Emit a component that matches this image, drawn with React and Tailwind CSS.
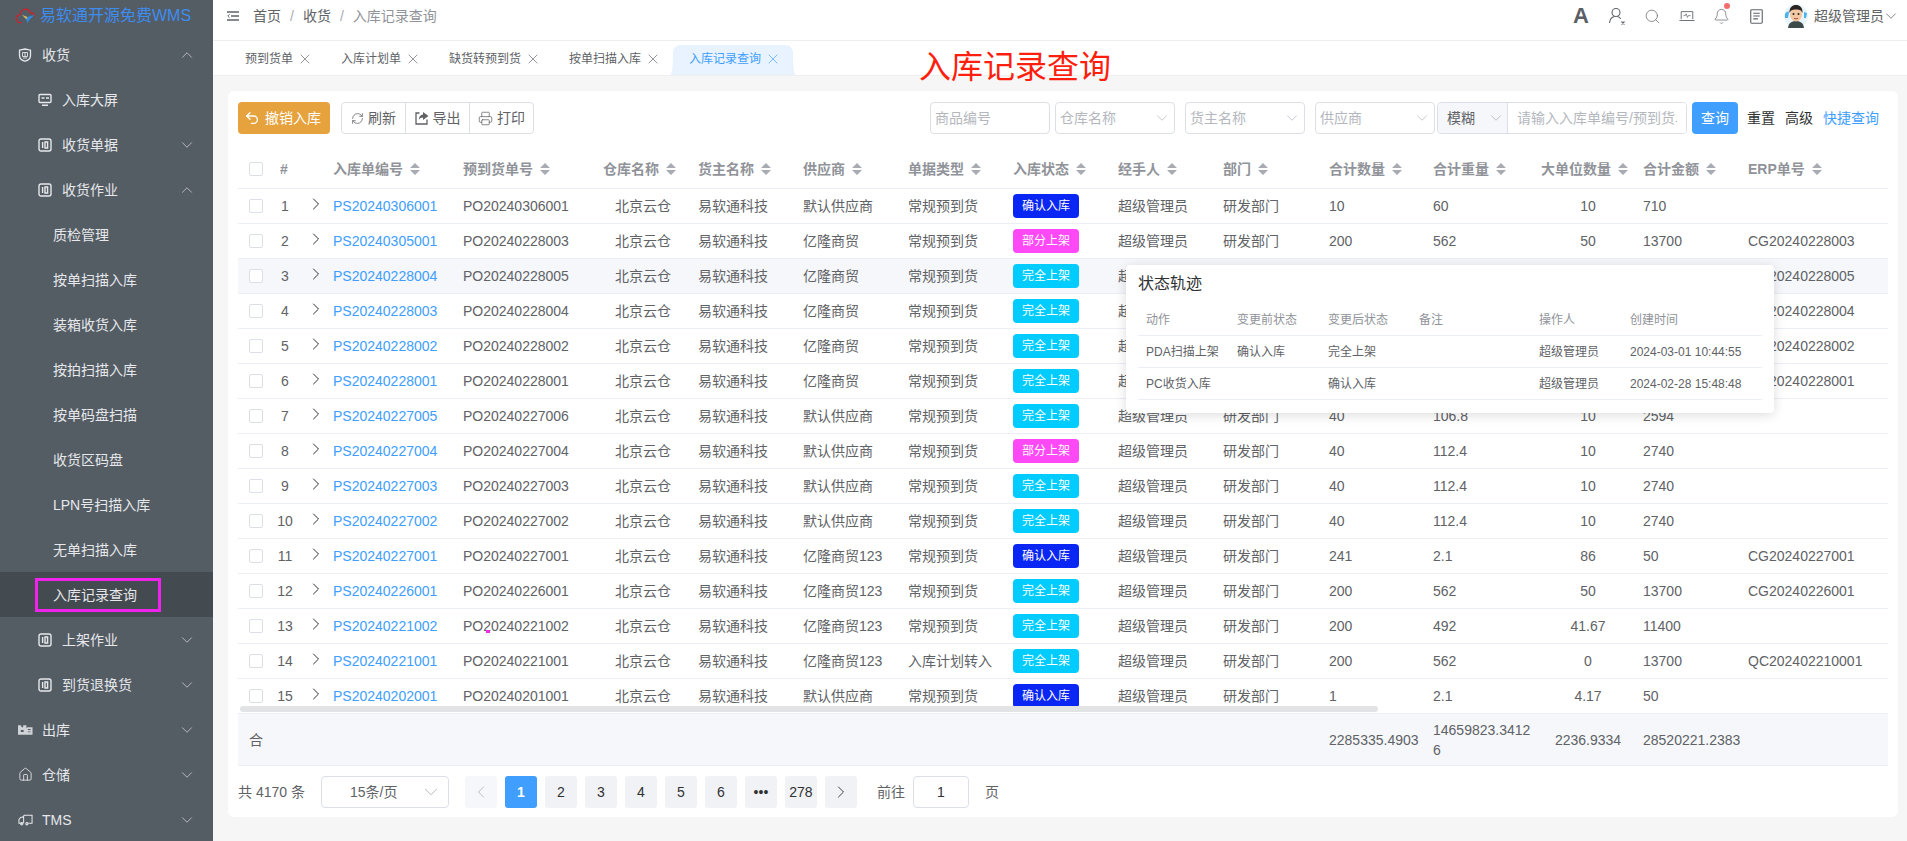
import React from 'react';
import { Bell, ChevronDown, ChevronLeft, ChevronRight, ChevronUp, House, Printer, RefreshCw, Search, Undo2, X } from 'lucide-react';

const fontStack = "font-['Liberation_Sans','Noto_Sans_CJK_SC',sans-serif]";

// Sidebar icons
const ShieldIcon = () => (
  <svg viewBox="0 0 14 14" className="w-[14px] h-[14px]" fill="none" stroke="currentColor">
    <path d="M1.5 2.2 7 1l5.5 1.2v5.2C12.5 10.4 9.8 12.4 7 13.2 4.2 12.4 1.5 10.4 1.5 7.4z" strokeWidth="1.3" />
    <path d="M4.5 4.5h5v4h-5zM7 4.5v4M5 10h4" strokeWidth="0.9" />
  </svg>
);

const ScreenIcon = () => (
  <svg viewBox="0 0 14 14" className="w-[14px] h-[14px]" fill="none" stroke="currentColor">
    <rect x="1" y="1.5" width="12" height="8" rx="1" strokeWidth="1.4" />
    <path d="M3.5 5h3M8 5h3M4 12.2h6" strokeWidth="1.5" />
  </svg>
);

const BoxIcon = () => (
  <svg viewBox="0 0 14 14" className="w-[14px] h-[14px]" fill="none" stroke="currentColor">
    <rect x="1" y="1" width="12" height="12" rx="2" strokeWidth="1.4" />
    <path d="M4.6 4v6M7 4h2.6v6H7z" strokeWidth="1.4" />
  </svg>
);

const OutboundIcon = () => (
  <svg viewBox="0 0 16 12" className="w-[15px] h-[12px]" fill="currentColor">
    <path d="M0 1h3l1 2h1.5V1H9v3l1-1h5.5v8H0z" opacity="0.85" />
    <path d="M3 6h3v2H3zM10.5 5h3v1h-3zM10.5 7.5h3v1h-3z" fill="#545c64" />
  </svg>
);

const TruckIcon = () => (
  <svg viewBox="0 0 16 12" className="w-[15px] h-[12px]" fill="none" stroke="currentColor" strokeWidth="1.1">
    <path d="M5 2.5 7 1h8v8.5h-4M5 9.5H1V5.5L3 3h3v6.5" />
    <circle cx="4" cy="10" r="1.2" />
    <circle cx="9.5" cy="10" r="1.2" />
  </svg>
);

const Logo = () => (
  <svg viewBox="0 0 22 18" className="w-[21px] h-[17px] shrink-0" fill="none">
    <path d="M6.5 15.5C3 15.8 1 13.6 1.2 11c.2-2.4 2-3.8 3.8-3.8C5.6 3.600 8.200 1.200 11 1.300c2.400.1 4.400 1.600 5 3.700 2.200-.1 4 1.300 4.300 3.200" stroke="#c9252d" strokeWidth="1.4" strokeLinecap="round" />
    <path d="M7.500 7.300 13 9.600 20.500 7.300 14.800 12.600 13.300 16.200 11.800 12z" fill="#2f8ce8" />
    <path d="M7.500 7.300 13 9.600 11.800 12z" fill="#f2b233" />
  </svg>
);

// Top bar icons
const MenuFoldIcon = () => (
  <svg viewBox="0 0 12 10" className="w-[12px] h-[10px]" fill="none" stroke="#5f6368" strokeWidth="1.5">
    <path d="M0 1h12M4 5h8M0 9h12" />
    <path d="M2.500 3.300 0.800 5l1.700 1.700" strokeWidth="1" />
  </svg>
);

const UserIcon = () => (
  <svg viewBox="0 0 18 18" className="w-[18px] h-[18px]" fill="none" stroke="#5f6368" strokeWidth="1.1">
    <circle cx="8" cy="5.500" r="4" />
    <path d="M1.500 16c.3-3.500 2.600-6 5-6.500M9.500 9.500c1.300.3 2.500 1.100 3.300 2.300" />
    <path d="M13.500 14.500l3 3M16.500 14.500l-3 3" />
  </svg>
);

const MonitorIcon = () => (
  <svg viewBox="0 0 18 14" className="w-[16px] h-[13px]" fill="none" stroke="#5f6368" strokeWidth="1">
    <path d="M2.500 10V1.500h13V10M0.500 11.500h17" />
    <path d="M5 6h2l1-2 1.500 4 1-2h2.500" strokeWidth="0.8" />
  </svg>
);

const DocIcon = () => (
  <svg viewBox="0 0 14 16" className="w-[13px] h-[15px]" fill="none" stroke="#5f6368" strokeWidth="1.200">
    <rect x="0.800" y="0.800" width="12.400" height="14.400" rx="1" />
    <path d="M3.500 4.500h7M3.500 7.500h7M3.500 10.500h5" />
  </svg>
);

const Avatar = () => (
  <svg viewBox="0 0 24 24" className="w-[24px] h-[24px] shrink-0">
    <circle cx="12" cy="12" r="12" fill="#e8f4fb" />
    <path d="M1 10c1-2 3-3 4-2l-1 6H1zM20 8l3 1-1 5h-2z" fill="#4bb3ea" />
    <path d="M4 24c.6-5 3.600-7 8-7s7.400 2 8 7z" fill="#3c4a4a" />
    <ellipse cx="12" cy="10.500" rx="6" ry="7" fill="#f3c7a2" />
    <path d="M5.500 9C5 3.500 8.500 1 12 1s7 2.500 6.500 8c-1-2.500-2.500-3.500-6.500-3.500S6.500 6.500 5.500 9z" fill="#2b2522" />
    <circle cx="9.500" cy="10" r="1" fill="#2b2522" />
    <circle cx="14.500" cy="10" r="1" fill="#2b2522" />
    <path d="M10 14.200c1.300.8 2.700.8 4 0" stroke="#a5503c" fill="none" />
  </svg>
);

const ExportIcon = () => (
  <svg viewBox="0 0 14 14" className="w-[14px] h-[14px]" fill="none" stroke="#606266" strokeWidth="1.300">
    <path d="M4.500 2H1v11h11V8.500" />
    <path d="M8 1v2.500C5.500 3.700 4 5.500 3.800 9c1.200-2 2.300-2.600 4.200-2.600V9l5.500-4z" fill="#606266" stroke="none" />
  </svg>
);

const SortCaret = () => (
  <svg viewBox="0 0 10 12" className="w-[10px] h-[12px] shrink-0 ml-[7px]" fill="#a8abb2">
    <path d="M5 0 10 5H0zM0 7h10l-5 5z" />
  </svg>
);

const menu = [
  { label: '收货', level: 1, icon: ShieldIcon, arrow: 'up' },
  { label: '入库大屏', level: 2, icon: ScreenIcon },
  { label: '收货单据', level: 2, icon: BoxIcon, arrow: 'down' },
  { label: '收货作业', level: 2, icon: BoxIcon, arrow: 'up' },
  { label: '质检管理', level: 3 },
  { label: '按单扫描入库', level: 3 },
  { label: '装箱收货入库', level: 3 },
  { label: '按拍扫描入库', level: 3 },
  { label: '按单码盘扫描', level: 3 },
  { label: '收货区码盘', level: 3 },
  { label: 'LPN号扫描入库', level: 3 },
  { label: '无单扫描入库', level: 3 },
  { label: '入库记录查询', level: 3, active: true },
  { label: '上架作业', level: 2, icon: BoxIcon, arrow: 'down' },
  { label: '到货退换货', level: 2, icon: BoxIcon, arrow: 'down' },
  { label: '出库', level: 1, icon: OutboundIcon, arrow: 'down' },
  { label: '仓储', level: 1, icon: () => <House size={15} strokeWidth={1.4} />, arrow: 'down' },
  { label: 'TMS', level: 1, icon: TruckIcon, arrow: 'down' },
];

const tabs = ['预到货单', '入库计划单', '缺货转预到货', '按单扫描入库', '入库记录查询'];

const colWidths = [30, 34, 21, 130, 130, 105, 105, 105, 105, 105, 105, 106, 104, 108, 102, 105, 150];

const headers = ['入库单编号', '预到货单号', '仓库名称', '货主名称', '供应商', '单据类型', '入库状态', '经手人', '部门', '合计数量', '合计重量', '大单位数量', '合计金额', 'ERP单号'];

const CONFIRM = '确认入库';
const PART = '部分上架';
const FULL = '完全上架';

const rows = [
  ['PS20240306001', 'PO20240306001', '默认供应商', '常规预到货', CONFIRM, '10', '60', '10', '710', ''],
  ['PS20240305001', 'PO20240228003', '亿隆商贸', '常规预到货', PART, '200', '562', '50', '13700', 'CG20240228003'],
  ['PS20240228004', 'PO20240228005', '亿隆商贸', '常规预到货', FULL, '200', '562', '50', '13700', 'CG20240228005'],
  ['PS20240228003', 'PO20240228004', '亿隆商贸', '常规预到货', FULL, '200', '562', '50', '13700', 'CG20240228004'],
  ['PS20240228002', 'PO20240228002', '亿隆商贸', '常规预到货', FULL, '200', '562', '50', '13700', 'CG20240228002'],
  ['PS20240228001', 'PO20240228001', '亿隆商贸', '常规预到货', FULL, '200', '562', '50', '13700', 'CG20240228001'],
  ['PS20240227005', 'PO20240227006', '默认供应商', '常规预到货', FULL, '40', '106.8', '10', '2594', ''],
  ['PS20240227004', 'PO20240227004', '默认供应商', '常规预到货', PART, '40', '112.4', '10', '2740', ''],
  ['PS20240227003', 'PO20240227003', '默认供应商', '常规预到货', FULL, '40', '112.4', '10', '2740', ''],
  ['PS20240227002', 'PO20240227002', '默认供应商', '常规预到货', FULL, '40', '112.4', '10', '2740', ''],
  ['PS20240227001', 'PO20240227001', '亿隆商贸123', '常规预到货', CONFIRM, '241', '2.1', '86', '50', 'CG20240227001'],
  ['PS20240226001', 'PO20240226001', '亿隆商贸123', '常规预到货', FULL, '200', '562', '50', '13700', 'CG20240226001'],
  ['PS20240221002', 'PO20240221002', '亿隆商贸123', '常规预到货', FULL, '200', '492', '41.67', '11400', ''],
  ['PS20240221001', 'PO20240221001', '亿隆商贸123', '入库计划转入', FULL, '200', '562', '0', '13700', 'QC202402210001'],
  ['PS20240202001', 'PO20240201001', '默认供应商', '常规预到货', CONFIRM, '1', '2.1', '4.17', '50', ''],
];

const statusClass = {
  [CONFIRM]: 'bg-[#0a26f5]',
  [PART]: 'bg-[#ff48f6]',
  [FULL]: 'bg-[#00ccff]',
};

const Sidebar = () => (
  <aside className="w-[213px] shrink-0 bg-[#545c64] text-[#e6e8eb] text-sm">
    <div className="h-[32px] flex items-center pl-[15px] gap-[4px]">
      <Logo />
      <span className="text-base text-[#3d8df0] whitespace-nowrap">易软通开源免费WMS</span>
    </div>
    {menu.map((item) => {
      const Icon = item.icon;
      return (
        <div
          key={item.label}
          className={`h-[45px] flex items-center pr-[17px] ${item.active ? 'bg-[#434a50]' : ''} ${item.level === 1 ? 'pl-[18px]' : item.level === 2 ? 'pl-[38px]' : 'pl-[53px]'}`}
        >
          {Icon && (
            <span className="w-[24px] shrink-0 flex items-center">
              <Icon />
            </span>
          )}
          <span className="flex-1 whitespace-nowrap">{item.label}</span>
          {item.arrow === 'up' && <ChevronUp size={18} strokeWidth={1.1} className="text-[#c9ccd0]" />}
          {item.arrow === 'down' && <ChevronDown size={18} strokeWidth={1.1} className="text-[#c9ccd0]" />}
        </div>
      );
    })}
  </aside>
);

const TopBar = () => (
  <header className="h-[41px] shrink-0 bg-white border-b border-[#eeeeee] flex items-center pb-[8px] pl-[14px] pr-[7px] text-sm">
    <MenuFoldIcon />
    <span className="ml-[14px] text-[#606266]">首页</span>
    <span className="mx-[9px] text-[#a8abb2]">/</span>
    <span className="text-[#606266]">收货</span>
    <span className="mx-[9px] text-[#a8abb2]">/</span>
    <span className="text-[#909399]">入库记录查询</span>
    <div className="ml-auto flex items-center">
      <span className="w-[20px] text-center text-[22px] leading-none font-bold text-[#5b5f66]">A</span>
      <span className="ml-[17px] w-[18px] flex justify-center"><UserIcon /></span>
      <span className="ml-[18px] w-[16px] flex justify-center"><Search size={17} strokeWidth={1} className="shrink-0 text-[#5f6368]" /></span>
      <span className="ml-[18px] w-[18px] flex justify-center"><MonitorIcon /></span>
      <span className="ml-[17px] w-[16px] flex justify-center relative">
        <Bell size={17} strokeWidth={1} className="shrink-0 text-[#5f6368]" />
        <span className="absolute -top-[5px] right-[-1px] w-[6px] h-[6px] rounded-full bg-[#f56c6c]" />
      </span>
      <span className="ml-[20px] w-[14px] flex justify-center"><DocIcon /></span>
      <span className="ml-[21px]"><Avatar /></span>
      <span className="ml-[6px] text-[#606266] whitespace-nowrap">超级管理员</span>
      <ChevronDown size={18} strokeWidth={1} className="text-[#606266] -ml-[2px]" />
    </div>
  </header>
);

const TabBar = () => (
  <div className="h-[35px] shrink-0 bg-white border-b border-[#efefef] flex items-end pl-[16px] text-xs">
    {tabs.map((tab, i) => {
      const active = i === tabs.length - 1;
      return (
        <div
          key={tab}
          className={`relative h-[30px] flex items-center pb-[2px] px-[16px] ${active ? 'text-[#409eff]' : 'text-[#606266]'}`}
        >
          {active && (
            <svg viewBox="0 0 126 30" preserveAspectRatio="none" className="absolute left-[-3px] top-0 w-[126px] h-[30px]" fill="#e8f3ff">
              <path d="M0 30C2 28 3 24 3 8 3 3 6 0 11 0h104c5 0 8 3 8 8 0 16 1 20 3 22z" />
            </svg>
          )}
          <span className="relative whitespace-nowrap">{tab}</span>
          <X size={16} strokeWidth={1} className="relative ml-[4px] mr-[-4px]" />
        </div>
      );
    })}
  </div>
);

const Field = ({ placeholder, width = 'w-[120px]', select, className = '' }) => (
  <div className={`h-[32px] ${width} shrink-0 border border-[#dcdfe6] rounded-[4px] flex items-center pl-[4px] pr-[3px] text-[#b4b7be] bg-white ${className}`}>
    <span className="flex-1 whitespace-nowrap">{placeholder}</span>
    {select && <ChevronDown size={18} strokeWidth={1} className="text-[#b4b7be]" />}
  </div>
);

const Toolbar = () => (
  <div className="h-[32px] flex items-center text-sm pr-[9px]">
    <button className="h-[32px] w-[92px] rounded-[4px] bg-[#e6a23c] text-white flex items-center pl-[6px] gap-[3px]">
      <Undo2 size={16} strokeWidth={2} />
      <span className="ml-[2px]">撤销入库</span>
    </button>
    <div className="ml-[11px] h-[32px] flex border border-[#dcdfe6] rounded-[4px] text-[#606266]">
      <div className="w-[64px] flex items-center justify-center gap-[4px] border-r border-[#dcdfe6]">
        <RefreshCw size={13} strokeWidth={1.4} />
        刷新
      </div>
      <div className="w-[64px] flex items-center justify-center gap-[4px] border-r border-[#dcdfe6]">
        <ExportIcon />
        导出
      </div>
      <div className="flex-1 w-[63px] flex items-center justify-center gap-[4px]">
        <Printer size={15} strokeWidth={1.2} />
        打印
      </div>
    </div>
    <div className="ml-auto flex items-center">
      <Field placeholder="商品编号" />
      <Field placeholder="仓库名称" select className="ml-[5px]" />
      <Field placeholder="货主名称" select className="ml-[10px]" />
      <Field placeholder="供应商" select className="ml-[10px]" />
      <div className="ml-[2px] w-[250px] h-[32px] flex border border-[#dcdfe6] rounded-[4px] overflow-hidden">
        <div className="w-[70px] bg-[#f5f7fa] border-r border-[#dcdfe6] flex items-center pl-[9px] pr-[2px] text-[#606266]">
          <span className="flex-1">模糊</span>
          <ChevronDown size={18} strokeWidth={1} className="text-[#a8abb2]" />
        </div>
        <input
          readOnly
          placeholder="请输入入库单编号/预到货单号"
          className="min-w-0 flex-1 pl-[9px] pr-[9px] outline-none bg-white placeholder:text-[#b4b7be]"
        />
      </div>
      <button className="ml-[5px] w-[46px] h-[32px] rounded-[4px] bg-[#409eff] text-white">查询</button>
      <span className="ml-[9px] text-[#303133]">重置</span>
      <span className="ml-[10px] text-[#303133]">高级</span>
      <span className="ml-[10px] text-[#409eff]">快捷查询</span>
    </div>
  </div>
);

const Checkbox = () => <span className="block w-[14px] h-[14px] border border-[#dcdfe6] rounded-[2px] bg-white" />;

const Th = ({ label, pad = 'pl-[10px]' }) => (
  <th className={`h-[44px] pt-[4px] border-b border-[#ebeef5] font-bold text-[#909399] text-left ${pad}`}>
    <span className="flex items-center whitespace-nowrap">
      {label}
      <SortCaret />
    </span>
  </th>
);

const RecordTable = () => (
  <table className="mt-[11px] w-[1650px] table-fixed border-separate border-spacing-0 text-sm text-[#606266]">
    <colgroup>
      {colWidths.map((w, i) => (
        <col key={i} style={{ width: w }} />
      ))}
    </colgroup>
    <thead>
      <tr>
        <th className="h-[44px] pt-[4px] border-b border-[#ebeef5] pl-[11px]"><Checkbox /></th>
        <th className="h-[44px] pt-[4px] border-b border-[#ebeef5] font-bold text-[#909399] text-left pl-[12px]">#</th>
        <th className="h-[44px] border-b border-[#ebeef5]" />
        {headers.map((h, i) => (
          <Th key={h} label={h} pad={i === 2 ? 'pl-[20px]' : 'pl-[10px]'} />
        ))}
      </tr>
    </thead>
    <tbody>
      {rows.map((r, i) => (
        <tr key={r[0]} className={`h-[35px] ${i === 2 ? 'bg-[#f5f7fa]' : ''}`}>
          <td className="border-b border-[#ebeef5] pl-[11px]"><Checkbox /></td>
          <td className="border-b border-[#ebeef5] text-center">{i + 1}</td>
          <td className="border-b border-[#ebeef5] pl-[4px]">
            <ChevronRight size={20} strokeWidth={1.2} className="-mt-[4px] text-[#303133]" />
          </td>
          <td className="border-b border-[#ebeef5] pl-[10px] text-[#409eff] whitespace-nowrap">{r[0]}</td>
          <td className="border-b border-[#ebeef5] pl-[10px] whitespace-nowrap">{r[1]}</td>
          <td className="border-b border-[#ebeef5] pl-[32px] whitespace-nowrap">北京云仓</td>
          <td className="border-b border-[#ebeef5] pl-[10px] whitespace-nowrap">易软通科技</td>
          <td className="border-b border-[#ebeef5] pl-[10px] whitespace-nowrap">{r[2]}</td>
          <td className="border-b border-[#ebeef5] pl-[10px] whitespace-nowrap">{r[3]}</td>
          <td className="border-b border-[#ebeef5] pl-[10px]">
            <span className={`w-[66px] h-[24px] rounded-[4px] text-xs text-white flex items-center justify-center ${statusClass[r[4]]}`}>{r[4]}</span>
          </td>
          <td className="border-b border-[#ebeef5] pl-[10px] whitespace-nowrap">超级管理员</td>
          <td className="border-b border-[#ebeef5] pl-[10px] whitespace-nowrap">研发部门</td>
          <td className="border-b border-[#ebeef5] pl-[10px]">{r[5]}</td>
          <td className="border-b border-[#ebeef5] pl-[10px]">{r[6]}</td>
          <td className="border-b border-[#ebeef5] pl-[22px] pr-[10px] text-center">{r[7]}</td>
          <td className="border-b border-[#ebeef5] pl-[10px]">{r[8]}</td>
          <td className="border-b border-[#ebeef5] pl-[10px] whitespace-nowrap">{r[9]}</td>
        </tr>
      ))}
    </tbody>
    <tfoot>
      <tr className="h-[52px] bg-[#f5f7fa] leading-[20px]">
        <td className="border-b border-[#ebeef5] pl-[11px]">合</td>
        <td colSpan={11} className="border-b border-[#ebeef5]" />
        <td className="border-b border-[#ebeef5] pl-[10px]">2285335.4903</td>
        <td className="border-b border-[#ebeef5] pl-[10px] break-all">14659823.34126</td>
        <td className="border-b border-[#ebeef5] pl-[22px] pr-[10px] text-center whitespace-nowrap">2236.9334</td>
        <td className="border-b border-[#ebeef5] pl-[10px]">28520221.2383</td>
        <td className="border-b border-[#ebeef5]" />
      </tr>
    </tfoot>
  </table>
);

const pages = ['1', '2', '3', '4', '5', '6', '•••', '278'];

const PageBtn = ({ children, active, muted }) => (
  <span
    className={`w-[32px] h-[32px] rounded-[3px] flex items-center justify-center ${active ? 'bg-[#409eff] text-white font-bold' : muted ? 'bg-[#f5f7fa] text-[#b4b7be]' : 'bg-[#f0f2f5] text-[#303133]'}`}
  >
    {children}
  </span>
);

const Pagination = () => (
  <div className="mt-[10px] h-[32px] flex items-center text-sm text-[#606266]">
    <span className="whitespace-nowrap">共 4170 条</span>
    <div className="ml-[16px] w-[128px] h-[32px] border border-[#dcdfe6] rounded-[4px] flex items-center pl-[28px] pr-[6px]">
      <span className="flex-1 whitespace-nowrap">15条/页</span>
      <ChevronDown size={22} strokeWidth={0.9} className="text-[#a8abb2]" />
    </div>
    <div className="ml-[16px] flex items-center gap-[8px]">
      <PageBtn muted><ChevronLeft size={20} strokeWidth={1.1} /></PageBtn>
      {pages.map((p, i) => (
        <PageBtn key={p} active={i === 0}>{p}</PageBtn>
      ))}
      <PageBtn><ChevronRight size={20} strokeWidth={1.1} /></PageBtn>
    </div>
    <span className="ml-[20px] whitespace-nowrap">前往</span>
    <div className="ml-[8px] w-[56px] h-[32px] border border-[#dcdfe6] rounded-[4px] flex items-center justify-center text-[#303133]">1</div>
    <span className="ml-[16px]">页</span>
  </div>
);

const traceCols = ['w-[91px]', 'w-[91px]', 'w-[91px]', 'w-[120px]', 'w-[91px]', 'w-[140px]'];
const traceHead = ['动作', '变更前状态', '变更后状态', '备注', '操作人', '创建时间'];
const traceRows = [
  ['PDA扫描上架', '确认入库', '完全上架', '', '超级管理员', '2024-03-01 10:44:55'],
  ['PC收货入库', '', '确认入库', '', '超级管理员', '2024-02-28 15:48:48'],
];

// Popover shown over the status column
const StatusPopover = () => (
  <div className="absolute left-[898px] top-[174px] w-[648px] h-[148px] bg-white rounded-[4px] shadow-[0_2px_12px_rgba(0,0,0,0.14)] px-[12px] pt-[8px] text-xs">
    <div className="text-base leading-[22px] text-[#303133]">状态轨迹</div>
    <div className="mt-[10px]">
      <div className="h-[31px] flex items-center border-b border-[#ebeef5] text-[#909399]">
        {traceHead.map((h, i) => (
          <span key={h} className={`${traceCols[i]} pl-[8px] whitespace-nowrap`}>{h}</span>
        ))}
      </div>
      {traceRows.map((r) => (
        <div key={r[5]} className="h-[32px] flex items-center border-b border-[#ebeef5] text-[#606266]">
          {r.map((c, i) => (
            <span key={i} className={`${traceCols[i]} pl-[8px] whitespace-nowrap`}>{c}</span>
          ))}
        </div>
      ))}
    </div>
  </div>
);

const App = () => (
  <div className={`relative flex h-screen w-full overflow-hidden bg-[#f6f6f6] ${fontStack}`}>
    <Sidebar />
    <div className="flex-1 min-w-0 flex flex-col">
      <TopBar />
      <TabBar />
      <div className="relative mt-[15px] ml-[15px] mr-[9px] h-[726px] bg-white rounded-[6px] px-[10px] pt-[11px]">
        <Toolbar />
        <RecordTable />
        <Pagination />
        {/* horizontal scroll thumb sits over the last row */}
        <div className="absolute left-[12px] top-[615px] w-[1138px] h-[6px] rounded-full bg-[#e2e3e5]" />
        <span className="absolute left-[258px] top-[539px] w-[4px] h-[3px] bg-[#f02ce8]" />
        <StatusPopover />
      </div>
    </div>
    {/* annotations drawn on top of the screenshot */}
    <div className="absolute left-[35px] top-[578px] w-[126px] h-[34px] border-[3px] border-[#f022ee]" />
    <div className="absolute left-[919px] top-[48px] text-[32px] leading-[38px] text-[#ff1f0f] whitespace-nowrap">入库记录查询</div>
  </div>
);

export default App;
